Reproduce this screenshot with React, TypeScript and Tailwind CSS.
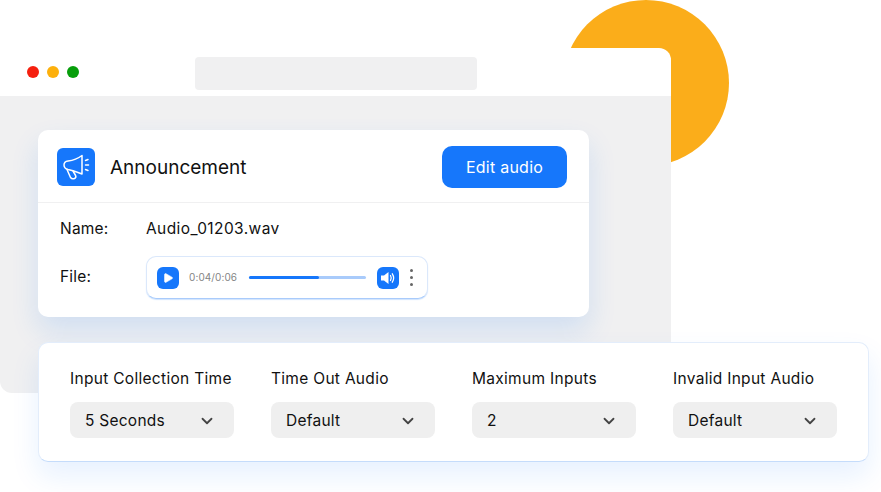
import { ChevronDown, Play } from "lucide-react";

const fields = [
  { label: "Input Collection Time", value: "5 Seconds" },
  { label: "Time Out Audio", value: "Default" },
  { label: "Maximum Inputs", value: "2" },
  { label: "Invalid Input Audio", value: "Default" },
];

function MegaphoneIcon() {
  return (
    <svg width="38" height="38" viewBox="0 0 38 38" fill="none" stroke="white" strokeWidth="1.5" strokeLinecap="round" strokeLinejoin="round">
      <path d="M25 7.5 L25 26 L21 24.5 Q16 22.5 11 21.5 Q7 20.5 7 17 Q7 13.5 11 13 Q19 12 25 7.5 Z" />
      <path d="M10 21.5 L13.5 29.5 Q15 31.5 17.5 30.5 Q19.5 29.5 18.6 27.5 L16 23" />
      <path d="M28.5 12.5 L31 11.5 M28.5 17 L31.5 17 M28.5 21.5 L31 22.5" />
    </svg>
  );
}

function VolumeIcon() {
  return (
    <svg width="22" height="22" viewBox="0 0 22 22" fill="none">
      <path d="M4 8.5 H7 L11.5 5 V17 L7 13.5 H4 Z" fill="white" />
      <path d="M13.5 8.5 Q15 11 13.5 13.5 M15.3 6.8 Q18 11 15.3 15.2" stroke="white" strokeWidth="1.3" strokeLinecap="round" />
    </svg>
  );
}

function Player() {
  return (
    <div className="flex h-[43px] w-[282px] items-center rounded-[10px] border border-[#dbe8fb] border-b-[#a9cbfb] bg-white pl-[10px] shadow-[0_1px_1px_rgba(22,119,251,0.2)]">
      <div className="flex size-[22px] items-center justify-center rounded-[6px] bg-[#1677fb]">
        <Play className="size-[12px] fill-white text-white" strokeWidth={1} />
      </div>
      <span className="ml-[10px] w-[60px] text-[10px] tracking-[0.1px] text-[#858585]">0:04/0:06</span>
      <div className="h-[3px] w-[117px] rounded-full bg-[#a9cbfb]">
        <div className="h-full w-[60%] rounded-full bg-[#1677fb]" />
      </div>
      <div className="ml-[11px] flex size-[22px] items-center justify-center rounded-[6px] bg-[#1677fb]">
        <VolumeIcon />
      </div>
      <div className="ml-[11px] flex flex-col gap-[4px]">
        <span className="size-[3px] rounded-full bg-[#666666]" />
        <span className="size-[3px] rounded-full bg-[#666666]" />
        <span className="size-[3px] rounded-full bg-[#666666]" />
      </div>
    </div>
  );
}

export default function App() {
  return (
    <div
      className="relative h-[492px] w-[881px] overflow-hidden bg-white text-[#111111]"
      style={{ fontFamily: "Inter, 'Noto Sans', sans-serif" }}
    >
      {/* orange circle behind the window */}
      <div className="absolute left-[563px] top-0 size-[166px] rounded-full bg-[#fbad1a]" />

      <div className="relative pt-[48px]">
        <div className="flex h-[345px] w-[671px] flex-col overflow-hidden rounded-bl-[12px] rounded-tr-[12px]">
          <div className="flex h-[48px] items-center bg-white pl-[27px]">
            <div className="flex gap-[8px]">
              <span className="size-[12px] rounded-full bg-[#f5200f]" />
              <span className="size-[12px] rounded-full bg-[#fdb00c]" />
              <span className="size-[12px] rounded-full bg-[#079e0b]" />
            </div>
            <div className="ml-[116px] mt-[3px] h-[33px] w-[282px] rounded-[4px] bg-[#f0f0f1]" />
          </div>
          <div className="flex-1 bg-[#f0f0f1] pl-[38px] pt-[34px]">
            <div className="h-[187px] w-[551px] rounded-[10px] bg-white shadow-[0_14px_28px_rgba(22,119,251,0.14)]">
              <div className="flex h-[73px] items-center border-b border-[#f0f0f1] pl-[19px] pr-[22px] pt-[1px]">
                <div className="flex size-[38px] items-center justify-center rounded-[6px] bg-[#1677fb]">
                  <MegaphoneIcon />
                </div>
                <span className="ml-[15px] mt-[3px] text-[19px]">Announcement</span>
                <button className="ml-auto mt-[1px] h-[42px] w-[125px] rounded-[10px] bg-[#1677fb] text-[16px] tracking-[0.25px] text-white">
                  Edit audio
                </button>
              </div>
              <div className="flex items-center pl-[22px] pt-[14px] text-[15.5px]">
                <span className="w-[86px] tracking-[0.2px]">Name:</span>
                <span className="tracking-[0.4px]">Audio_01203.wav</span>
              </div>
              <div className="flex items-start pl-[22px] pt-[19px] text-[15.5px]">
                <span className="w-[86px] pt-[6px] tracking-[0.2px]">File:</span>
                <div className="-mt-[3px]">
                  <Player />
                </div>
              </div>
            </div>
          </div>
        </div>

        <div className="relative ml-[38px] -mt-[51px] grid h-[120px] w-[831px] grid-cols-[164px_164px_164px_164px] gap-x-[37px] rounded-[10px] border border-[#e3edfb] border-b-[#c5dcfb] bg-white pl-[31px] pt-[26px] shadow-[0_14px_28px_rgba(22,119,251,0.1)]">
          {fields.map((field) => (
            <div key={field.label}>
              <p className="text-[15.5px] leading-[20px] tracking-[0.3px]">{field.label}</p>
              <div className="mt-[13px] flex h-[36px] items-center justify-between rounded-[8px] bg-[#efefef] pl-[15px] pr-[18px] pt-[1px] text-[15.5px] tracking-[0.25px]">
                <span>{field.value}</span>
                <ChevronDown className="size-[18px] text-[#444444]" strokeWidth={2.4} />
              </div>
            </div>
          ))}
        </div>
      </div>
    </div>
  );
}
